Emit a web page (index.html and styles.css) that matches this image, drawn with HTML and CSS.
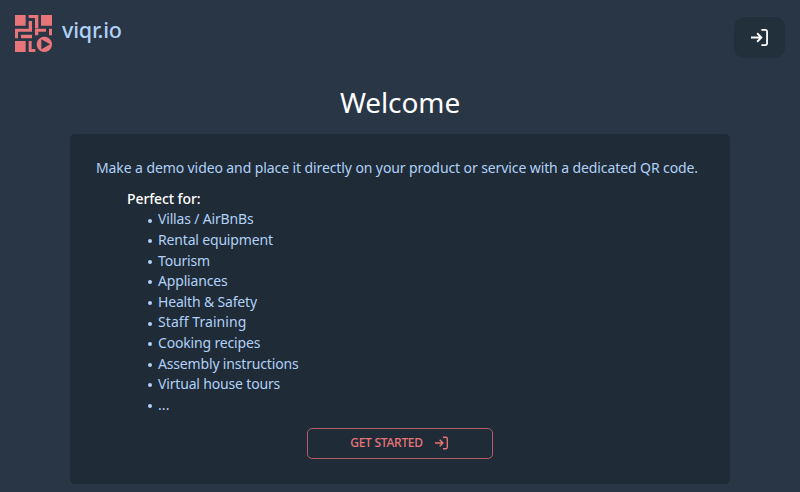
FILE: index.html
```html
<!DOCTYPE html>
<html lang="en">
<head>
<meta charset="utf-8">
<title>viqr.io</title>
<link rel="stylesheet" href="styles.css">
</head>
<body>
<header class="header">
  <a class="brand">
    <svg class="logo" viewBox="0 0 111 111" fill="#e8757a">
      <path d="M0 0h32v32H0zM78 0h33v32H78zM0 78h32v33H0z"/>
      <path d="M41 0h29v40H60V9H41zM41 18h10v32H9v20H0V41h41zM18 59h33v11H18zM60 41h33v9H70v11H60zM102 41h9v20h-9zM41 78h9v24h11v9H41z"/>
      <path fill-rule="evenodd" d="M88 65a23 23 0 1 0 .1 0zM79 73l26 15-26 15z"/>
    </svg>
    <span class="brand-name">viqr.io</span>
  </a>
  <button class="login" aria-label="Log in">
    <svg class="login-icon" viewBox="0 0 18 18"><path d="M0 9h11M6.500 4.500L11 9l-4.500 4.500M11 1h4q2 0 2 2v12q0 2-2 2h-4"/></svg>
  </button>
</header>
<main class="main">
  <h1 class="title">Welcome</h1>
  <section class="card">
    <p class="intro">Make a demo video and place it directly on your product or service with a dedicated QR code.</p>
    <div class="uses">
      <p class="uses-title">Perfect for:</p>
      <ul class="list">
        <li>Villas / AirBnBs</li>
        <li>Rental equipment</li>
        <li>Tourism</li>
        <li>Appliances</li>
        <li>Health &amp; Safety</li>
        <li class="loose">Staff Training</li>
        <li>Cooking recipes</li>
        <li>Assembly instructions</li>
        <li>Virtual house tours</li>
        <li class="loose">...</li>
      </ul>
    </div>
    <button class="start"><span>GET STARTED</span>
      <svg class="start-icon" viewBox="0 0 18 18"><path d="M0 9h11M6.500 4.500L11 9l-4.500 4.500M11 1h4q2 0 2 2v12q0 2-2 2h-4"/></svg>
    </button>
  </section>
</main>
</body>
</html>
```
FILE: styles.css
```css
* { box-sizing: border-box; }
body { margin: 0; height: 492px; overflow: hidden; background: #293646; color: #b1d1f8; font-family: "Noto Sans", sans-serif; font-size: 14px; }
button { font: inherit; padding: 0; }
p, h1, ul { margin: 0; padding: 0; }
.header { height: 83px; padding: 15px 15px 0; display: flex; justify-content: space-between; align-items: flex-start; }
.brand { display: flex; gap: 10px; }
.logo { width: 37px; height: 37px; }
.brand-name { font-size: 21.5px; line-height: 30px; font-weight: 500; letter-spacing: -0.15px; }
.login { width: 51px; height: 41px; margin-top: 2px; border: 0; border-radius: 10px; background: #22303c; display: flex; align-items: center; justify-content: center; }
.login-icon { width: 17px; height: 17px; fill: none; stroke: #fff; stroke-width: 1.9; }
.title { height: 51px; line-height: 38px; text-align: center; color: #fff; font-weight: 400; font-size: 28px; letter-spacing: -0.1px; }
.card { width: 660px; height: 350px; margin: 0 auto; padding: 24px 26px; border-radius: 5px; background: #1f2b36; }
.intro { line-height: 20px; white-space: nowrap; letter-spacing: -0.097px; }
.uses { padding: 10px 0 0 31px; }
.uses-title { line-height: 21px; color: #fff; font-weight: 500; letter-spacing: -0.1px; }
.list { list-style: none; padding: 0.4px 0 0 21px; letter-spacing: -0.17px; }
.list li { height: 20.6px; line-height: 20.6px; display: flex; align-items: center; gap: 6px; }
.list li::before { content: ""; width: 4px; height: 4px; border-radius: 50%; background: #b1d1f8; margin-top: 2px; }
.list .loose { letter-spacing: 0.07px; }
.start { width: 186px; height: 31px; margin: 12.6px auto 0; border: 1px solid #b55d65; border-radius: 5px; background: transparent; color: #e8757a; display: flex; align-items: center; justify-content: center; gap: 12px; font-size: 12px; font-weight: 500; letter-spacing: -0.25px; padding: 0 2px 2px 0; }
.start-icon { width: 13px; height: 14px; margin-top: 2px; fill: none; stroke: #e8757a; stroke-width: 1.9; }
```
